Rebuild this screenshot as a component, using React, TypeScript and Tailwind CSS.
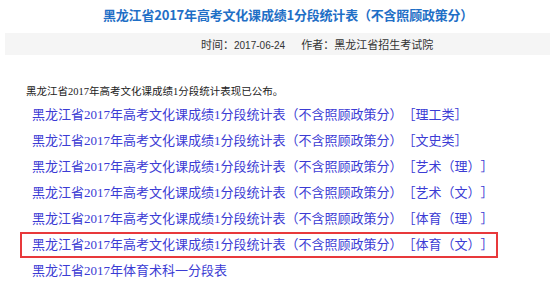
const links = ["理工类", "文史类", "艺术（理）", "艺术（文）", "体育（理）", "体育（文）"];

const base = "黑龙江省2017年高考文化课成绩1分段统计表（不含照顾政策分）";

export default function App() {
  return (
    <div className="w-[550px] h-[293px] overflow-hidden bg-white [text-spacing-trim:space-all]">
      {/* title */}
      <h1 className="h-[33px] flex items-center pl-[103px] pb-[3px] text-[13px] font-bold tracking-[-0.2px] text-[#1f6fc6] [font-family:'Noto_Sans_CJK_SC',sans-serif]">
        {base}
      </h1>

      {/* meta bar */}
      <div className="ml-[5px] h-[22px] bg-[#f5f5f5] flex items-center pl-[196px] text-[11px] text-[#333] [font-family:'Noto_Sans_CJK_SC',sans-serif]">
        <span>
          时间：<span className="text-[10px] [font-family:'Liberation_Sans',sans-serif]">2017-06-24</span>
        </span>
        <span className="ml-[16px]">作者：黑龙江省招生考试院</span>
      </div>

      <div className="pl-[20px] pt-[27px] [font-family:'Liberation_Serif','Noto_Sans_CJK_SC',serif]">
        <p className="h-[20px] flex items-center pl-[6px] text-[10.5px] text-[#222]">
          黑龙江省2017年高考文化课成绩1分段统计表现已公布。
        </p>
        <ul>
          {links.map((tag, i) => (
            <li
              key={tag}
              className={
                i === 5
                  ? "h-[26px] w-[478px] flex items-center pl-[10px] border-2 border-[#e8393b]"
                  : "h-[26px] flex items-center pl-[10px] border-2 border-transparent"
              }
            >
              <a className="text-[13px] text-[#3b3bd4]">
                {base}［{tag}］
              </a>
            </li>
          ))}
          <li className="h-[26px] flex items-center pl-[10px] border-2 border-transparent">
            <a className="text-[13px] text-[#3b3bd4]">黑龙江省2017年体育术科一分段表</a>
          </li>
        </ul>
      </div>
    </div>
  );
}
